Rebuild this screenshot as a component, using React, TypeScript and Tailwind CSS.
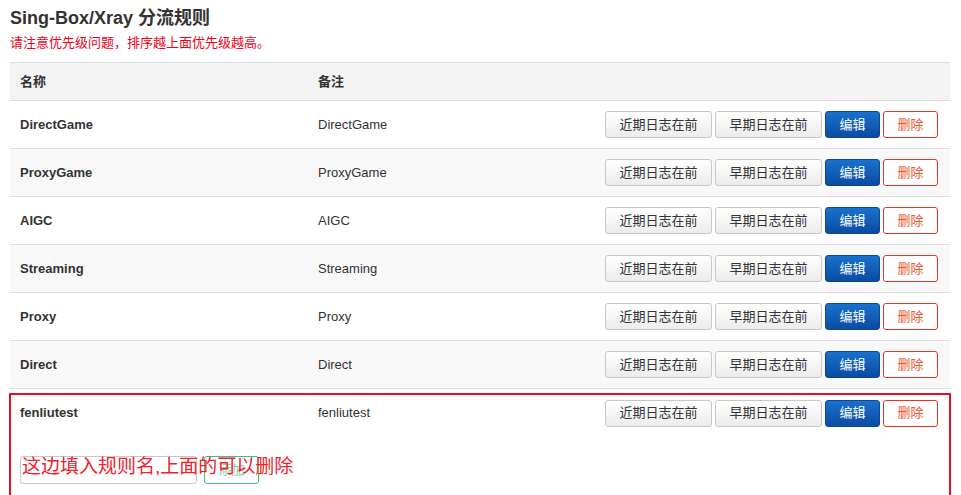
import { type FC } from "react";

const RULES = [
  { name: "DirectGame", note: "DirectGame" },
  { name: "ProxyGame", note: "ProxyGame" },
  { name: "AIGC", note: "AIGC" },
  { name: "Streaming", note: "Streaming" },
  { name: "Proxy", note: "Proxy" },
  { name: "Direct", note: "Direct" },
  { name: "fenliutest", note: "fenliutest" },
];

const font = "font-['Liberation_Sans','Noto_Sans_CJK_SC',sans-serif]";

const Actions: FC = () => (
  <div className="flex items-center gap-[3px]">
    <button className="w-[107px] h-[27px] rounded-[3px] border border-[#c8c8c8] bg-gradient-to-b from-white to-[#ececec] text-[13px] text-[#333]">
      近期日志在前
    </button>
    <button className="w-[107px] h-[27px] rounded-[3px] border border-[#c8c8c8] bg-gradient-to-b from-white to-[#ececec] text-[13px] text-[#333]">
      早期日志在前
    </button>
    <button className="w-[55px] h-[27px] rounded-[3px] border border-[#0b4a96] bg-gradient-to-b from-[#1a72cc] to-[#0c4ba3] text-[13px] text-white">
      编辑
    </button>
    <button className="w-[55px] h-[27px] rounded-[3px] border border-[#f0301c] bg-white text-[13px] text-[#f0542c]">
      删除
    </button>
  </div>
);

const App: FC = () => {
  return (
    <div className={`w-[961px] h-[495px] overflow-hidden bg-white px-[10px] pt-[6px] ${font}`}>
      {/* 标题 */}
      <h2 className="text-[18px] font-bold text-[#333] leading-[24px]">Sing-Box/Xray 分流规则</h2>
      <p className="mt-[5px] text-[13px] text-[#f40018] leading-[16px]">
        请注意优先级问题，排序越上面优先级越高。
      </p>

      {/* 表格 */}
      <div className="mt-[11px] w-[940px] border-t border-[#dcdcdc]">
        <div className="flex h-[38px] items-center bg-[#f3f3f3] border-b border-[#dcdcdc] text-[13px] font-bold text-[#333]">
          <div className="w-[298px] pl-[10px]">名称</div>
          <div className="pl-[10px]">备注</div>
        </div>

        {RULES.slice(0, 6).map((r, i) => (
          <div
            key={r.name}
            className={`flex h-[48px] items-center border-b border-[#dcdcdc] text-[13px] text-[#333] ${
              i % 2 === 1 ? "bg-[#f8f8f8]" : "bg-white"
            }`}
          >
            <div className="w-[298px] pl-[10px] font-bold">{r.name}</div>
            <div className="flex-1 pl-[10px]">{r.note}</div>
            <div className="pr-[12px]">
              <Actions />
            </div>
          </div>
        ))}

        {/* 最后一行 + 添加 */}
        <div className="relative border-b border-[#dcdcdc]">
          <div className="flex h-[48px] items-center text-[13px] text-[#333]">
            <div className="w-[298px] pl-[10px] font-bold">{RULES[6].name}</div>
            <div className="flex-1 pl-[10px]">{RULES[6].note}</div>
            <div className="pr-[12px]">
              <Actions />
            </div>
          </div>
          <div className="flex items-center gap-[7px] pl-[10px] pt-[19px] pb-[11px]">
            <input
              type="text"
              className="w-[177px] h-[28px] rounded-[3px] border border-[#c8c8c8] px-2 text-[13px] focus:outline-none"
            />
            <button className="w-[55px] h-[28px] rounded-[3px] border border-[#3cc47c] bg-white text-[13px] text-[#7ad6a4]">
              添加
            </button>
          </div>

          {/* 标注 */}
          <div className="absolute left-[-1px] top-[4px] w-[942px] h-[120px] border-2 border-[#e8101c] pointer-events-none" />
          <div className="absolute left-[12px] top-[66px] text-[19px] leading-[24px] text-[#f0202c] pointer-events-none">
            这边填入规则名,上面的可以删除
          </div>
        </div>
      </div>
    </div>
  );
};

export default App;
